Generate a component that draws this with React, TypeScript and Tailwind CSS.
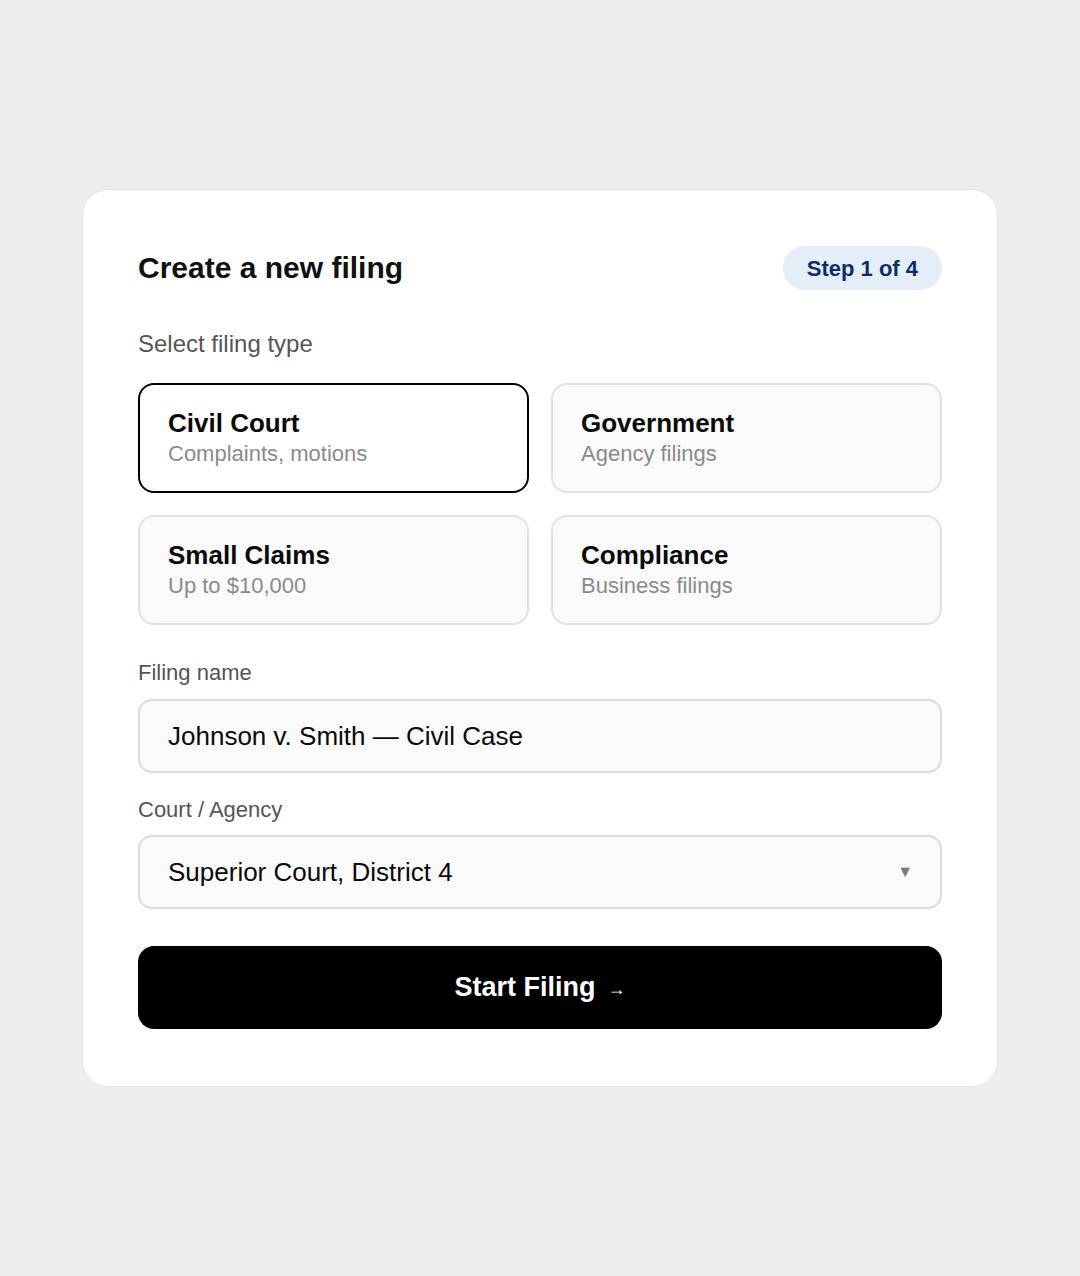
import React from "react";

const options = [
  { title: "Civil Court", sub: "Complaints, motions", selected: true },
  { title: "Government", sub: "Agency filings", selected: false },
  { title: "Small Claims", sub: "Up to $10,000", selected: false },
  { title: "Compliance", sub: "Business filings", selected: false },
];

export default function App() {
  return (
    <div className="min-h-[1276px] w-full bg-[#efeeec] pt-[189px] font-['Liberation_Sans',Arial,sans-serif]">
      <div className="mx-auto w-[916px] rounded-[26px] border border-[#e6e5e2] bg-white px-[55px] pt-[56px] pb-[57px]">
        <div className="flex h-[44px] items-center justify-between">
          <h1 className="text-[30px] font-bold leading-none text-[#111]">Create a new filing</h1>
          <span className="flex h-[44px] items-center rounded-full bg-[#e4eef9] px-[24px] text-[22px] font-bold text-[#0d2c6a]">
            Step 1 of 4
          </span>
        </div>

        <p className="mt-[40px] text-[24px] leading-[28px] text-[#555]">Select filing type</p>

        <div className="mt-[25px] grid grid-cols-2 gap-[22px]">
          {options.map((o) => (
            <div
              key={o.title}
              className={
                o.selected
                  ? "h-[110px] rounded-[16px] border-2 border-black bg-white px-[28px] pt-[23px]"
                  : "h-[110px] rounded-[16px] border-2 border-[#e2e2e2] bg-[#fafafa] px-[28px] pt-[23px]"
              }
            >
              <p className="text-[26px] font-bold leading-[30px] text-[#0a0a0a]">{o.title}</p>
              <p className="mt-[3px] text-[22px] leading-[26px] text-[#8a8a8a]">{o.sub}</p>
            </div>
          ))}
        </div>

        <p className="mt-[35px] text-[22px] leading-[26px] text-[#555]">Filing name</p>
        <div className="mt-[13px] flex h-[74px] items-center rounded-[14px] border-2 border-[#dcdcdc] bg-[#fafafa] px-[28px]">
          <span className="text-[26px] text-[#0a0a0a]">Johnson v. Smith — Civil Case</span>
        </div>

        <p className="mt-[24px] text-[22px] leading-[26px] text-[#555]">Court / Agency</p>
        <div className="mt-[12px] flex h-[74px] items-center justify-between rounded-[14px] border-2 border-[#dcdcdc] bg-[#fafafa] pl-[28px] pr-[27px]">
          <span className="text-[26px] text-[#0a0a0a]">Superior Court, District 4</span>
          <span className="text-[16px] text-[#7a7a7a]">▼</span>
        </div>

        <button className="mt-[37px] flex h-[83px] w-full items-center justify-center rounded-[16px] bg-black text-white">
          <span className="text-[27px] font-bold">Start Filing</span>
          <span className="ml-[12px] mt-[4px] text-[18px] font-bold">→</span>
        </button>
      </div>
    </div>
  );
}
